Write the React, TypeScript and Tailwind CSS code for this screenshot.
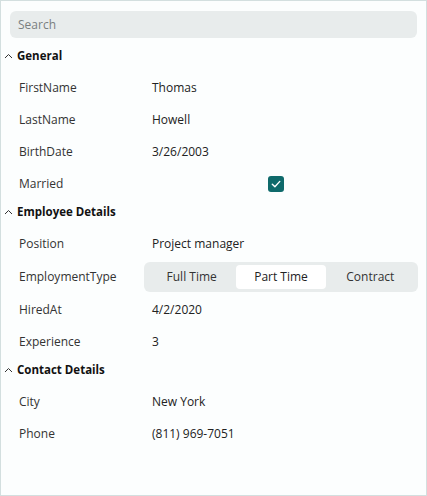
import React from "react";

const font = { fontFamily: '"Open Sans", "Noto Sans", sans-serif' };

function Chevron() {
  return (
    <svg width="9" height="6" viewBox="0 0 9 6" className="ml-[3px] mr-[4px]">
      <path d="M1 5 L4.5 1.5 L8 5" fill="none" stroke="#333" strokeWidth="1" />
    </svg>
  );
}

function Header({ title }: { title: string }) {
  return (
    <div className="h-[24px] mb-[4px] flex items-center">
      <Chevron />
      <span className="text-[11.5px] font-bold text-[#111]">{title}</span>
    </div>
  );
}

function Row({ label, children, tall }: { label: string; children: React.ReactNode; tall?: boolean }) {
  return (
    <div className={`flex items-center ${tall ? "h-[34px]" : "h-[32px]"}`}>
      <div className="w-[143px] pl-[18px] text-[12px] text-[#333]">{label}</div>
      <div className="w-[274px] text-[12px] text-[#222]">{children}</div>
    </div>
  );
}

function Value({ v }: { v: string }) {
  return <div className="pl-[8px]">{v}</div>;
}

export default function App() {
  return (
    <div style={font} className="w-[427px] h-[496px] border border-[#d3dfdf] bg-[#fcfefe] overflow-hidden">
      <div className="px-[9px] pt-[10px]">
        <div className="h-[27px] rounded-[6px] bg-[#e8ecec] flex items-center pl-[8px] text-[12px] text-[#7a7f80]">
          Search
        </div>
      </div>
      <div className="mt-[6px]">
        <Header title="General" />
        <Row label="FirstName"><Value v="Thomas" /></Row>
        <Row label="LastName"><Value v="Howell" /></Row>
        <Row label="BirthDate"><Value v="3/26/2003" /></Row>
        <Row label="Married">
          <div className="flex justify-center pr-[10px]">
            <div className="w-[16px] h-[16px] rounded-[3px] bg-[#0f6a6b] flex items-center justify-center">
              <svg width="12" height="12" viewBox="0 0 12 12">
                <path d="M2.3 6.2 L4.9 8.8 L9.8 3.4" fill="none" stroke="white" strokeWidth="1.4" strokeLinecap="round" strokeLinejoin="round" />
              </svg>
            </div>
          </div>
        </Row>
        <Header title="Employee Details" />
        <Row label="Position"><Value v="Project manager" /></Row>
        <Row label="EmploymentType" tall>
          <div className="h-[30px] rounded-[6px] bg-[#e8ecec] p-[3px] flex">
            <div className="flex-1 flex items-center justify-center text-[#333]">Full Time</div>
            <div className="flex-1 flex items-center justify-center bg-white rounded-[4px] text-[#222]">Part Time</div>
            <div className="flex-1 flex items-center justify-center text-[#333]">Contract</div>
          </div>
        </Row>
        <Row label="HiredAt"><Value v="4/2/2020" /></Row>
        <Row label="Experience"><Value v="3" /></Row>
        <Header title="Contact Details" />
        <Row label="City"><Value v="New York" /></Row>
        <Row label="Phone"><Value v="(811) 969-7051" /></Row>
      </div>
    </div>
  );
}
